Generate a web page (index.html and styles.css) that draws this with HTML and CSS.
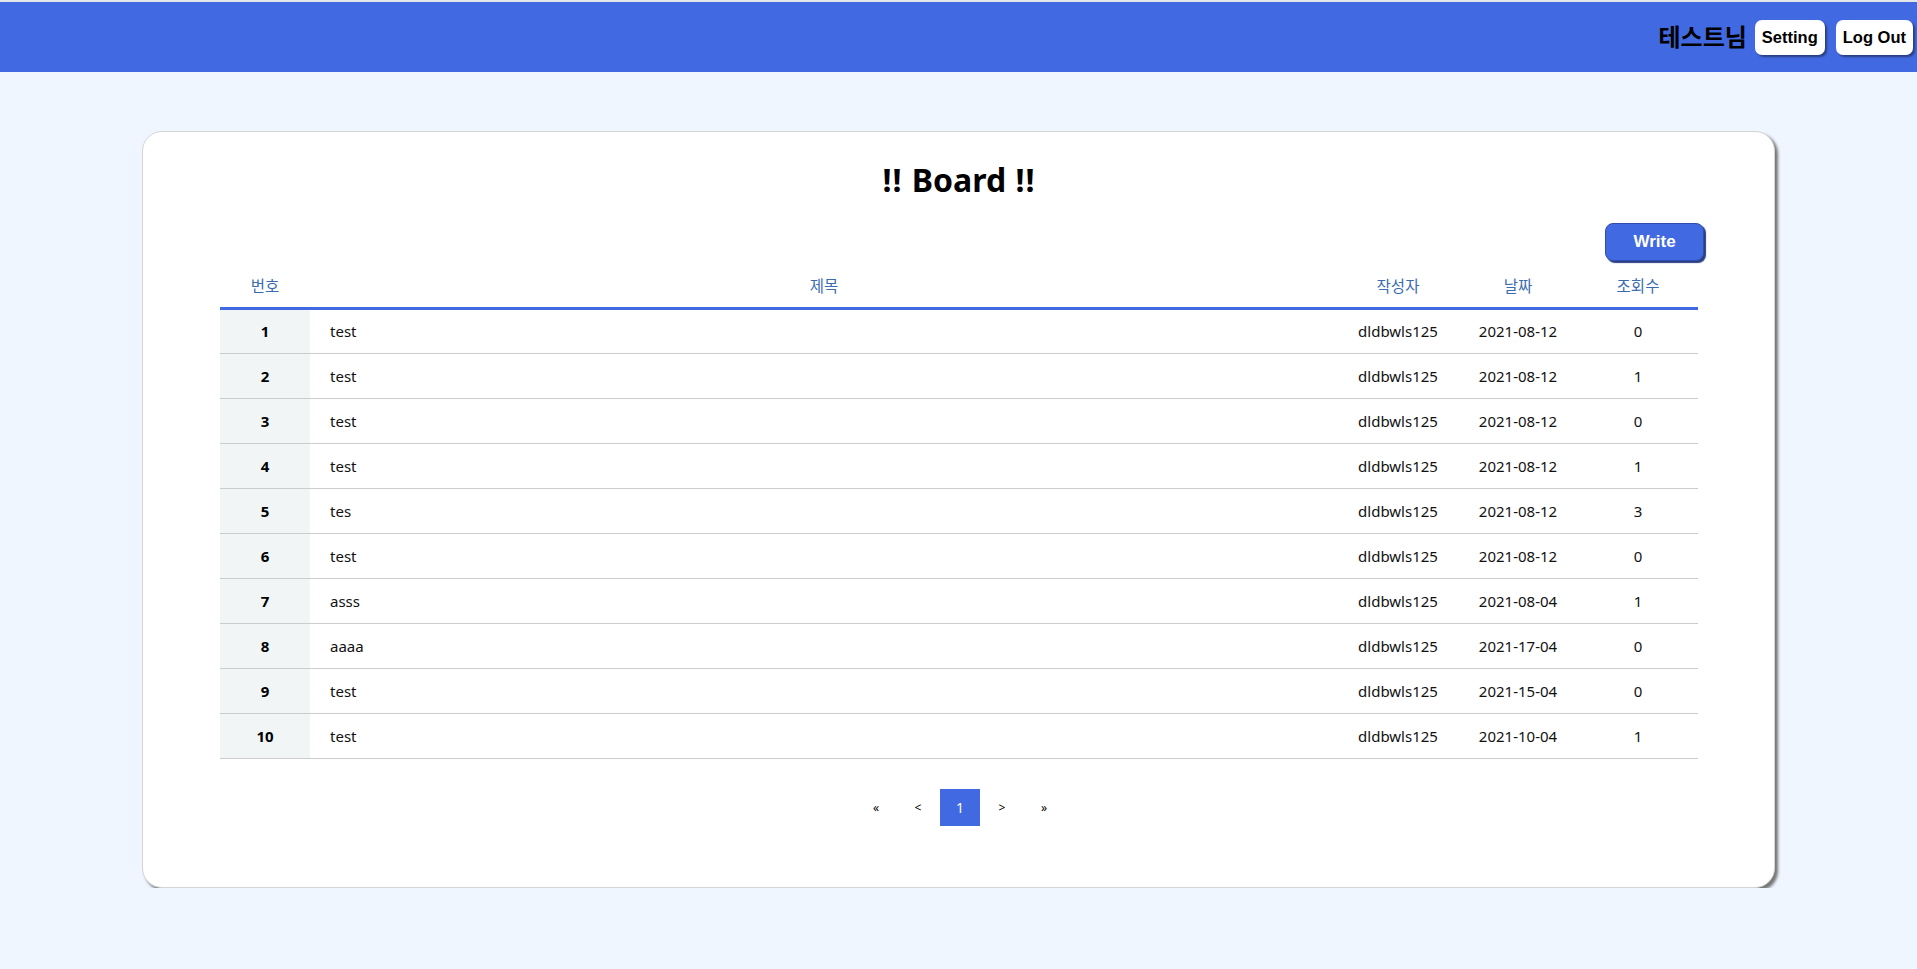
FILE: index.html
```html
<!DOCTYPE html>
<html lang="ko">
<head>
<meta charset="utf-8">
<title>Board</title>
<link rel="stylesheet" href="styles.css">
</head>
<body>
<header class="topbar">
  <span class="user-name">테스트님</span>
  <button class="top-btn">Setting</button>
  <button class="top-btn">Log Out</button>
</header>

<main class="card">
  <h1 class="board-title"><span class="bang">!!</span> Board <span class="bang">!!</span></h1>
  <div class="toolbar">
    <button class="write-btn">Write</button>
  </div>
  <table class="board">
    <colgroup>
      <col class="c-no">
      <col>
      <col class="c-w">
      <col class="c-w">
      <col class="c-w">
    </colgroup>
    <thead>
      <tr>
        <th>번호</th>
        <th>제목</th>
        <th>작성자</th>
        <th>날짜</th>
        <th>조회수</th>
      </tr>
    </thead>
    <tbody>
      <tr><td class="no">1</td><td class="subject">test</td><td>dldbwls125</td><td>2021-08-12</td><td>0</td></tr>
      <tr><td class="no">2</td><td class="subject">test</td><td>dldbwls125</td><td>2021-08-12</td><td>1</td></tr>
      <tr><td class="no">3</td><td class="subject">test</td><td>dldbwls125</td><td>2021-08-12</td><td>0</td></tr>
      <tr><td class="no">4</td><td class="subject">test</td><td>dldbwls125</td><td>2021-08-12</td><td>1</td></tr>
      <tr><td class="no">5</td><td class="subject">tes</td><td>dldbwls125</td><td>2021-08-12</td><td>3</td></tr>
      <tr><td class="no">6</td><td class="subject">test</td><td>dldbwls125</td><td>2021-08-12</td><td>0</td></tr>
      <tr><td class="no">7</td><td class="subject">asss</td><td>dldbwls125</td><td>2021-08-04</td><td>1</td></tr>
      <tr><td class="no">8</td><td class="subject">aaaa</td><td>dldbwls125</td><td>2021-17-04</td><td>0</td></tr>
      <tr><td class="no">9</td><td class="subject">test</td><td>dldbwls125</td><td>2021-15-04</td><td>0</td></tr>
      <tr><td class="no">10</td><td class="subject">test</td><td>dldbwls125</td><td>2021-10-04</td><td>1</td></tr>
    </tbody>
  </table>
  <nav class="pager">
    <a class="pg">&laquo;</a>
    <a class="pg">&lt;</a>
    <a class="pg active">1</a>
    <a class="pg">&gt;</a>
    <a class="pg">&raquo;</a>
  </nav>
</main>
</body>
</html>
```
FILE: styles.css
```css
* { box-sizing: border-box; }

body {
  margin: 0;
  background: #eff6ff;
  font-family: "Noto Sans", "Noto Sans CJK KR", sans-serif;
  color: #000;
}

.topbar {
  border-top: 2px solid #e4e6ea;
  height: 72px;
  background: #4169e1;
  display: flex;
  justify-content: flex-end;
  align-items: center;
  padding-right: 4px;
  gap: 11px;
}

.user-name {
  font-family: "Liberation Sans", "Noto Sans CJK KR", sans-serif;
  font-weight: bold;
  font-size: 24px;
  margin-right: -3px;
  margin-top: -3px;
  color: #000;
}

.top-btn {
  font-family: "Liberation Sans", Arial, sans-serif;
  font-weight: bold;
  font-size: 16.5px;
  height: 35px;
  padding: 0 7px;
  background: #fff;
  color: #000;
  border: none;
  border-radius: 7px;
  box-shadow: 2px 2px 2px #2a3f80;
  margin-top: 1px;
}

.card {
  width: 1633px;
  margin: 59px auto 0;
  background: #fff;
  border: 1px solid #d4d4d4;
  border-radius: 20px;
  box-shadow: 3px 3px 3px #777;
  padding: 0 76px 61px 77px;
}

.board-title {
  margin: 26px 0 0;
  text-align: center;
  font-size: 32px;
  line-height: 44px;
  font-weight: bold;
  word-spacing: 1px;
}

.bang {
  letter-spacing: 1px;
  font-feature-settings: "liga" 0;
}

.toolbar {
  display: flex;
  justify-content: flex-end;
  margin: 21px -6px 0 0;
}

.write-btn {
  width: 99px;
  height: 38px;
  background: #4169e1;
  color: #fff;
  font-family: "Liberation Sans", Arial, sans-serif;
  font-weight: bold;
  font-size: 17px;
  border: 1px solid #2f4fb0;
  border-radius: 8px;
  box-shadow: 2px 2px 1px #2a3f80;
}

.board {
  width: 100%;
  border-collapse: collapse;
  table-layout: fixed;
  font-size: 15px;
}

.c-no { width: 90px; }
.c-w { width: 120px; }

.board thead th {
  height: 47px;
  font-weight: normal;
  color: #3b6cb0;
  font-size: 15.5px;
  border-bottom: 3px solid #4169e1;
  padding: 4px 0 0;
  text-align: center;
}

.board tbody td {
  height: 45px;
  border-bottom: 1px solid #cccccc;
  text-align: center;
  padding: 0;
  color: #111;
}

.board tbody td.no {
  background: #f2f5f6;
  font-weight: bold;
  color: #000;
}

.board tbody td.subject {
  text-align: left;
  padding-left: 20px;
}

.pager {
  display: flex;
  justify-content: center;
  gap: 2px;
  margin-top: 30px;
  padding-left: 2px;
}

.pg {
  width: 40px;
  height: 37px;
  display: flex;
  align-items: center;
  justify-content: center;
  font-size: 12px;
  color: #000;
}

.pg.active {
  background: #4169e1;
  color: #fff;
  font-size: 14px;
}
```
